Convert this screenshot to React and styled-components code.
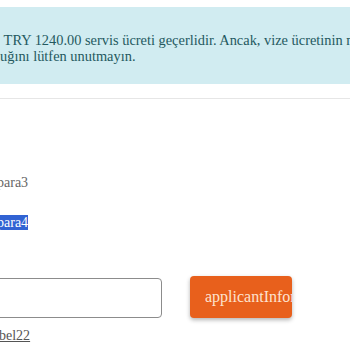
import React from "react";
import styled, { createGlobalStyle } from "styled-components";

const GlobalStyle = createGlobalStyle`
  html, body {
    margin: 0;
    padding: 0;
    background: #ffffff;
    overflow: hidden;
  }
  body {
    font-family: "Liberation Serif", "Times New Roman", serif;
    font-size: 14px;
    line-height: 16px;
  }
`;

const Page = styled.div`
  width: 350px;
  height: 350px;
  overflow: hidden;
  padding-top: 7px;
  box-sizing: border-box;
`;

const Alert = styled.div`
  margin-left: -20px;
  padding: 25px 0 20px 20px;
  background: #d1ecf1;
  color: #24595f;
  font-size: 14.4px;
  line-height: 16px;
  white-space: nowrap;
  overflow: hidden;
`;

const Divider = styled.hr`
  margin: 14px 0 0;
  border: 0;
  border-top: 1px solid #e6e6e6;
  height: 0;
`;

const Para = styled.p`
  margin: ${(p) => p.$top}px 0 0 -3px;
  color: #666666;
  font-size: 14px;
  line-height: 16px;
  white-space: nowrap;
`;

const Selected = styled.span`
  background: #3163d3;
  color: #ffffff;
`;

const FormRow = styled.div`
  display: flex;
  align-items: flex-end;
  margin-top: 45px;
`;

const Input = styled.input`
  margin-left: -20px;
  width: 182px;
  height: 40px;
  box-sizing: border-box;
  border: 1px solid #8c8c8c;
  border-radius: 4px;
  background: #ffffff;
  outline: none;
  padding: 0 10px;
  font-family: inherit;
`;

const Button = styled.button`
  margin-left: 28px;
  width: 102px;
  height: 42px;
  box-sizing: border-box;
  padding: 0 0 0 15px;
  border: 0;
  border-radius: 4px;
  background: #e8601c;
  color: #fde3cf;
  font-family: "Liberation Serif", "Times New Roman", serif;
  font-size: 16px;
  text-align: left;
  white-space: nowrap;
  overflow: hidden;
  box-shadow: 0 2px 4px rgba(0, 0, 0, 0.3);
  cursor: pointer;
`;

const LinkText = styled.a`
  display: block;
  margin: 10px 0 0 -1px;
  color: #555555;
  text-decoration: underline;
  font-size: 14px;
  line-height: 16px;
`;

export default function App() {
  return (
    <>
      <GlobalStyle />
      <Page>
        <Alert>
          {"\u00a0TRY 1240.00 servis ücreti geçerlidir. Ancak, vize ücretinin mutlaka ödenmesi gerektiğini"}
          <br />
          uğını lütfen unutmayın.
        </Alert>
        <Divider />
        <Para $top={76}>para3</Para>
        <Para $top={24}>
          <Selected>para4</Selected>
        </Para>
        <FormRow>
          <Input type="text" />
          <Button type="button">applicantInformation</Button>
        </FormRow>
        <LinkText href="#">bel22</LinkText>
      </Page>
    </>
  );
}
